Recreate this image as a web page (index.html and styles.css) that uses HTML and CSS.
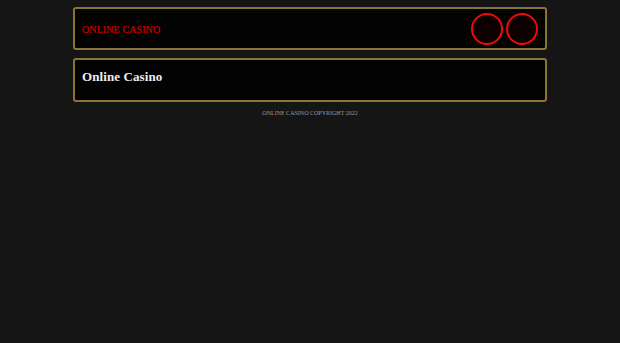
FILE: index.html
```html
<!DOCTYPE html>
<html lang="en">
<head>
  <meta charset="UTF-8" />
  <meta name="viewport" content="width=device-width, initial-scale=1.0" />
  <title>Online Casino</title>
  <link rel="stylesheet" href="styles.css">
</head>
<body>

  <div class="wrap">
    <header class="box header">
      <a class="logo" href="#">ONLINE CASINO</a>
      <div class="buttons">
        <span class="circle"></span>
        <span class="circle"></span>
      </div>
    </header>

    <section class="box title-box">
      <h1>Online Casino</h1>
    </section>

    <footer class="footer">ONLINE CASINO COPYRIGHT 2022</footer>
  </div>

</body>
</html>
```

FILE: styles.css
```css
* {
  margin: 0;
  padding: 0;
  box-sizing: border-box;
}

body {
  height: 100vh;
  background: #151515;
  font-family: 'Liberation Serif', 'Times New Roman', serif;
  color: white;
}

.wrap {
  width: 474px;
  margin: 0 auto;
  padding-top: 7px;
  display: flex;
  flex-direction: column;
  gap: 8px;
}

.box {
  background: #030303;
  border: 2px solid #8a7537;
  border-radius: 3px;
}

.header {
  height: 43px;
  display: flex;
  align-items: center;
  justify-content: space-between;
  padding: 0 7px 0 7px;
}

.logo {
  color: #d00000;
  font-size: 10px;
  text-decoration: none;
  letter-spacing: 0.1px;
  margin-top: 1px;
  -webkit-text-stroke: 0.2px #d00000;
}

.buttons {
  display: flex;
  gap: 3px;
}

.circle {
  width: 32px;
  height: 32px;
  border: 2px solid #f00a0a;
  border-radius: 50%;
  background: #0d0000;
}

.title-box {
  height: 44px;
  display: flex;
  align-items: center;
  padding: 0 7px;
}

.title-box h1 {
  font-size: 13px;
  font-weight: bold;
  letter-spacing: 0.1px;
  color: #eeeeee;
  margin-top: -6px;
}

.footer {
  text-align: center;
  font-size: 6px;
  color: #9a9a9a;
  margin-top: 0;
}
```
